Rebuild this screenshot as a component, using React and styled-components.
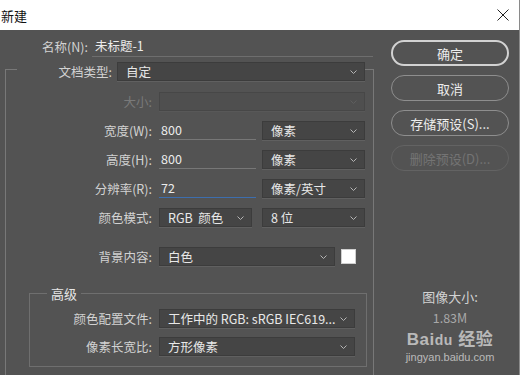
import React from 'react';
import styled, { createGlobalStyle } from 'styled-components';

const GlobalStyle = createGlobalStyle`
  html, body { margin: 0; padding: 0; }
  body {
    width: 520px;
    height: 375px;
    overflow: hidden;
    font-family: "Noto Sans CJK SC", "Noto Sans", sans-serif;
  }
  * { box-sizing: border-box; }
`;

const Window = styled.div`
  width: 520px;
  height: 375px;
  display: flex;
  flex-direction: column;
  background: #535353;
  border-right: 1px solid #8a8a8a;
  overflow: hidden;
`;

const TitleBar = styled.div`
  height: 30px;
  flex: none;
  background: #fff;
  display: flex;
  align-items: center;
  justify-content: space-between;
  padding: 0 10px 0 1px;
  font-size: 13px;
  color: #111;
`;

const Body = styled.div`
  flex: 1;
  display: flex;
  overflow: hidden;
`;

const LeftPane = styled.div`
  width: 374px;
  flex: none;
  padding-top: 6px;
`;

const NameRow = styled.div`
  display: flex;
  align-items: center;
  padding-left: 42px;
  height: 21px;
`;

const Label = styled.div`
  width: ${p => p.$w ? `${p.$w}px` : 'auto'};
  margin-right: ${p => p.$gap ?? 7}px;
  text-align: right;
  font-size: 12.5px;
  white-space: nowrap;
  color: ${p => p.$disabled ? '#7a7a7a' : '#d2d2d2'};
`;

const NameInput = styled.div`
  width: 281px;
  height: 21px;
  line-height: 20px;
  margin-left: -3px;
  padding-left: 3px;
  border-bottom: 1px solid #6e6e6e;
  font-size: 12.5px;
  color: #ececec;
`;

const Group = styled.div`
  margin: 12px 0 0 5px;
  width: 369px;
  border: 1px solid #787878;
  border-bottom: none;
  padding-bottom: 40px;
`;

const GroupHeader = styled.div`
  margin: -8px 0 0 11px;
  width: 348px;
  height: 19px;
  background: #535353;
  display: flex;
  align-items: center;
`;

const Row = styled.div`
  display: flex;
  align-items: center;
  height: 19px;
  margin-top: ${p => p.$top ?? 10}px;
`;

const SelectBox = styled.div`
  width: ${p => p.$w}px;
  height: 19px;
  flex: none;
  display: flex;
  align-items: center;
  justify-content: space-between;
  padding: 0 7px 0 8px;
  margin-left: ${p => p.$ml ?? 0}px;
  background: ${p => p.$disabled ? '#4f4f4f' : '#454545'};
  border: 1px solid ${p => p.$disabled ? '#474747' : '#3c3c3c'};
  box-shadow: 0 1px 0 ${p => p.$disabled ? '#585858' : '#606060'};
  font-size: 12.5px;
  color: #e8e8e8;
  white-space: pre;
  overflow: hidden;
`;

const Chevron = ({ faint }) => (
  <svg width="7" height="4" viewBox="0 0 7 4" style={{ flex: 'none' }}>
    <path d="M0.5 0.5 L3.5 3.5 L6.5 0.5" fill="none" stroke={faint ? '#5e5e5e' : '#b5b5b5'} strokeWidth="1" />
  </svg>
);

const Select = ({ w, ml, disabled, children }) => (
  <SelectBox $w={w} $ml={ml} $disabled={disabled}>
    <span>{children}</span>
    <Chevron faint={disabled} />
  </SelectBox>
);

const Field = styled.div`
  width: 97px;
  height: 19px;
  line-height: 18px;
  padding-left: 2px;
  border-bottom: 1px solid ${p => p.$active ? '#3d6eae' : '#777'};
  font-size: 12.5px;
  color: #ececec;
`;

const Swatch = styled.div`
  width: 15px;
  height: 15px;
  margin-left: 6px;
  background: #fff;
  border: 1px solid #cfcfcf;
`;

const SubGroup = styled.div`
  margin: 27px 0 0 23px;
  width: 338px;
  border: 1px solid #6f6f6f;
  padding-bottom: 10px;
`;

const SubLegend = styled.div`
  margin: -8px 0 0 17px;
  width: fit-content;
  padding: 0 4px;
  background: #535353;
  font-size: 13px;
  line-height: 15px;
  color: #e6e6e6;
`;

const RightPane = styled.div`
  flex: 1;
  display: flex;
  flex-direction: column;
  align-items: flex-start;
  padding: 10px 0 0 17px;
`;

const Button = styled.div`
  width: 118px;
  height: 26px;
  margin-bottom: 9px;
  border-radius: 13px;
  display: flex;
  align-items: center;
  justify-content: center;
  font-size: 13px;
  border: ${p => p.$variant === 'primary' ? '2px solid #d2d2d2' : p.$variant === 'disabled' ? '1.5px solid #636363' : '1.5px solid #8e8e8e'};
  color: ${p => p.$variant === 'disabled' ? '#747474' : '#ececec'};
`;

const Info = styled.div`
  width: 118px;
  margin-top: ${p => p.$top}px;
  text-align: center;
  font-size: ${p => p.$size ?? 12.5}px;
  line-height: 16px;
  color: ${p => p.$color ?? '#d2d2d2'};
`;

const Watermark = styled.div`
  width: 118px;
  margin-top: 4px;
  text-align: center;
  color: rgba(255, 255, 255, 0.6);
  font-family: "Liberation Sans", "Noto Sans CJK SC", sans-serif;
`;

const Brand = styled.div`
  font-size: 17px;
  font-weight: bold;
  line-height: 20px;
  letter-spacing: 0.5px;
`;

const Site = styled.div`
  font-size: 11px;
  line-height: 14px;
`;

export default function App() {
  return (
    <>
      <GlobalStyle />
      <Window>
        <TitleBar>
          <span>新建</span>
          <svg width="12" height="12" viewBox="0 0 12 12">
            <path d="M0.5 0.5 L11.5 11.5 M11.5 0.5 L0.5 11.5" stroke="#222" strokeWidth="1" />
          </svg>
        </TitleBar>
        <Body>
          <LeftPane>
            <NameRow>
              <Label>名称(N):</Label>
              <NameInput>未标题-1</NameInput>
            </NameRow>
            <Group>
              <GroupHeader>
                <Label $w={95} $gap={5}>文档类型:</Label>
                <Select w={248}>自定</Select>
              </GroupHeader>
              <Row $top={11}>
                <Label $w={146} $disabled>大小:</Label>
                <Select w={206} disabled />
              </Row>
              <Row>
                <Label $w={146}>宽度(W):</Label>
                <Field>800</Field>
                <Select w={103} ml={6}>像素</Select>
              </Row>
              <Row>
                <Label $w={146}>高度(H):</Label>
                <Field>800</Field>
                <Select w={103} ml={6}>像素</Select>
              </Row>
              <Row>
                <Label $w={146}>分辨率(R):</Label>
                <Field $active>72</Field>
                <Select w={103} ml={6}>像素/英寸</Select>
              </Row>
              <Row>
                <Label $w={146}>颜色模式:</Label>
                <Select w={93}>RGB  颜色</Select>
                <Select w={103} ml={10}>8 位</Select>
              </Row>
              <Row $top={20}>
                <Label $w={146}>背景内容:</Label>
                <Select w={176}>白色</Select>
                <Swatch />
              </Row>
              <SubGroup>
                <SubLegend>高级</SubLegend>
                <Row $top={8}>
                  <Label $w={122}>颜色配置文件:</Label>
                  <Select w={196}>工作中的 RGB: sRGB IEC619...</Select>
                </Row>
                <Row $top={9}>
                  <Label $w={122}>像素长宽比:</Label>
                  <Select w={196}>方形像素</Select>
                </Row>
              </SubGroup>
            </Group>
          </LeftPane>
          <RightPane>
            <Button $variant="primary">确定</Button>
            <Button>取消</Button>
            <Button>存储预设(S)...</Button>
            <Button $variant="disabled">删除预设(D)...</Button>
            <Info $top={109} $size={13}>图像大小:</Info>
            <Info $top={5} $color="#a8a8a8">1.83M</Info>
            <Watermark>
              <Brand>Bai<span style={{ fontSize: 14 }}>du</span> 经验</Brand>
              <Site>jingyan.baidu.com</Site>
            </Watermark>
          </RightPane>
        </Body>
      </Window>
    </>
  );
}
